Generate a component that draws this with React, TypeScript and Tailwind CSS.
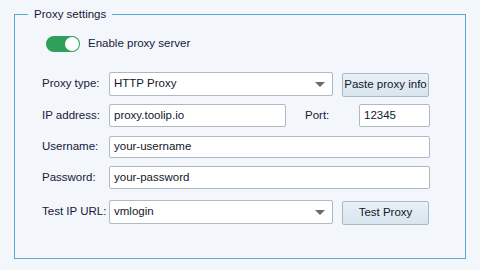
import React from 'react';

const font = { fontFamily: '"Liberation Sans", Arial, sans-serif' };

const Field = ({ value, className = '' }: { value: string; className?: string }) => (
  <div className={`h-[23px] bg-white border border-[#adb9c5] rounded-[2px] flex items-center px-[4px] text-[11.5px] text-[#101828] ${className}`}>
    {value}
  </div>
);

const Select = ({ value }: { value: string }) => (
  <div className="w-[224px] h-[24px] bg-white border border-[#adb9c5] rounded-[2px] flex items-center justify-between pl-[4px] pr-[7px] text-[11.5px] text-[#101828]">
    <span>{value}</span>
    <span className="w-0 h-0 border-l-[5px] border-r-[5px] border-t-[5px] border-l-transparent border-r-transparent border-t-[#6b6b6b]" />
  </div>
);

const Btn = ({ label }: { label: string }) => (
  <button className="w-[87px] h-[24px] whitespace-nowrap border border-[#a9b9c8] rounded-[2px] bg-gradient-to-b from-[#e9f0f6] to-[#d9e5ee] text-[11.5px] text-[#101828]">
    {label}
  </button>
);

const Label = ({ children }: { children: React.ReactNode }) => (
  <div className="w-[67px] whitespace-nowrap text-[11.5px] text-[#15203a]">{children}</div>
);

export default function App() {
  return (
    <div className="w-[480px] h-[270px] bg-[#f3f6fa] pt-[5px] pl-[14px]" style={font}>
      <fieldset className="w-[452px] h-[254px] border border-[#5aa6d6] pl-[27px]">
        <legend className="ml-[-14px] px-[6px] text-[11.5px] text-[#15203a] leading-[18px]">Proxy settings</legend>

        <div className="flex items-center gap-[8px] mt-[13px] ml-[4px] h-[16px]">
          <div className="w-[34px] h-[16px] rounded-full bg-[#2ea05a] flex items-center justify-end pr-[1px]">
            <div className="w-[14px] h-[14px] rounded-full bg-white" />
          </div>
          <span className="text-[11.5px] text-[#15203a]">Enable proxy server</span>
        </div>

        <div className="flex flex-col mt-[20px]">
          <div className="flex items-center h-[24px]">
            <Label>Proxy type:</Label>
            <Select value="HTTP Proxy" />
            <div className="ml-[9px]"><Btn label="Paste proxy info" /></div>
          </div>
          <div className="flex items-center h-[23px] mt-[8px]">
            <Label>IP address:</Label>
            <Field value="proxy.toolip.io" className="w-[177px]" />
            <div className="ml-[19px] w-[54px] text-[11.5px] text-[#15203a]">Port:</div>
            <Field value="12345" className="w-[71px]" />
          </div>
          <div className="flex items-center h-[22px] mt-[9px]">
            <Label>Username:</Label>
            <Field value="your-username" className="w-[321px] !h-[22px]" />
          </div>
          <div className="flex items-center h-[23px] mt-[8px]">
            <Label>Password:</Label>
            <Field value="your-password" className="w-[321px]" />
          </div>
          <div className="flex items-center h-[24px] mt-[11px]">
            <Label>Test IP URL:</Label>
            <Select value="vmlogin" />
            <div className="ml-[9px]"><Btn label="Test Proxy" /></div>
          </div>
        </div>
      </fieldset>
    </div>
  );
}
